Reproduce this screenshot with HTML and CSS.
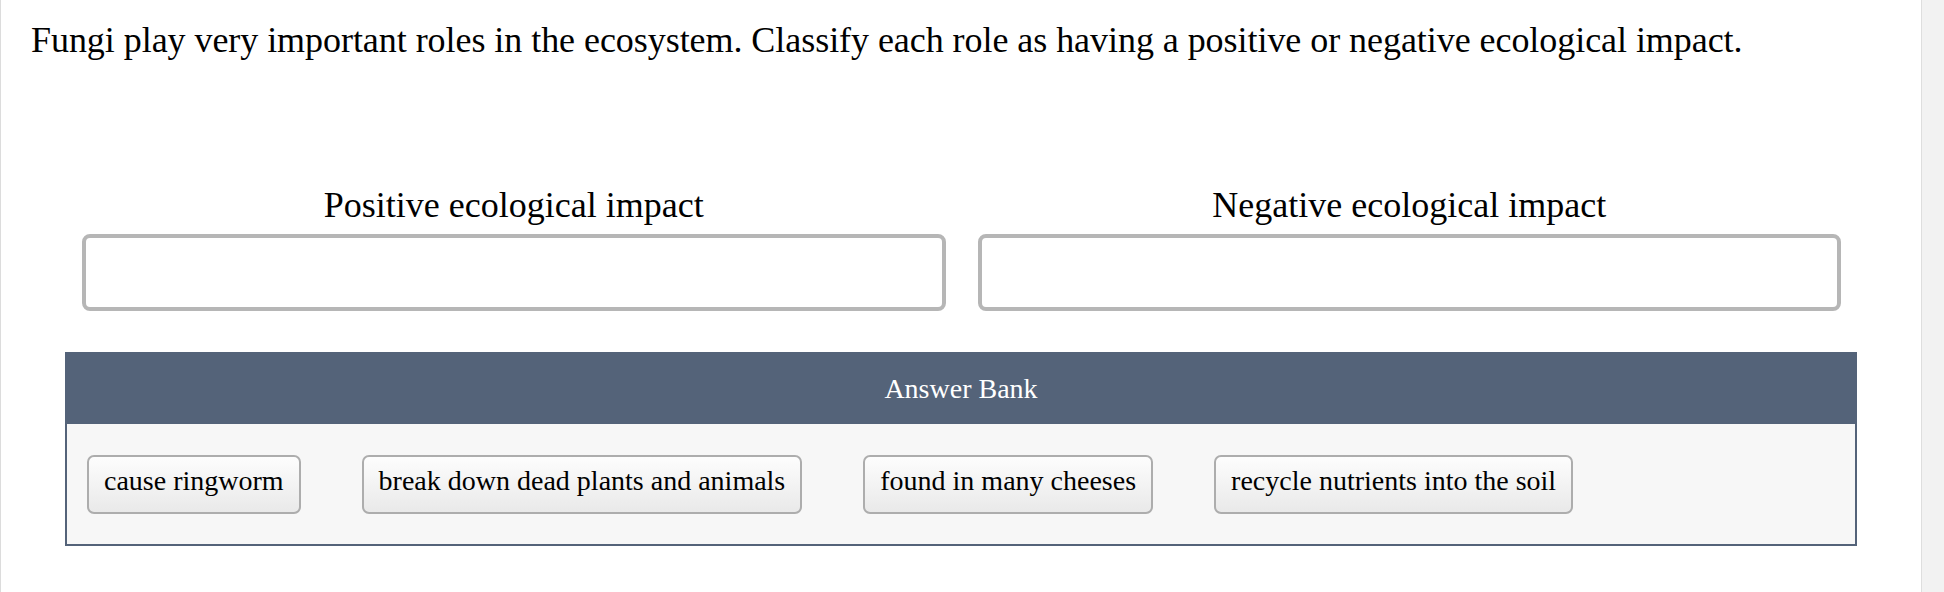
FILE: index.html
```html
<!DOCTYPE html>
<html>
<head>
    <meta http-equiv="Content-Type" content="text/html; charset=UTF-8">
    <title>Fungi ecological impact</title>
    <link rel="stylesheet" href="styles.css">
</head>
<body>
<div class="page">
    <div class="exercise">
        <p class="question">Fungi play very important roles in the ecosystem. Classify each role as having a positive or negative ecological impact.</p>

        <div class="bins">
            <div class="bin">
                <div class="bin-title">Positive ecological impact</div>
                <div class="drop-zone"></div>
            </div>
            <div class="bin">
                <div class="bin-title">Negative ecological impact</div>
                <div class="drop-zone"></div>
            </div>
        </div>

        <div class="answer-bank">
            <div class="bank-header">Answer Bank</div>
            <div class="bank-items">
                <div class="tile">cause ringworm</div>
                <div class="tile">break down dead plants and animals</div>
                <div class="tile">found in many cheeses</div>
                <div class="tile">recycle nutrients into the soil</div>
            </div>
        </div>
    </div>
    <div class="sidebar"></div>
</div>
</body>
</html>
```

FILE: styles.css
```css
html,
body {
    margin: 0;
    height: 100%;
    background: #fff;
}

body {
    font-family: "Liberation Serif", "Times New Roman", serif;
    color: #000;
}

.page {
    display: flex;
    height: 100%;
}

.exercise {
    flex: 1;
    border-left: 1px solid #dcdcdc;
}

.sidebar {
    width: 22px;
    background: #f2f2f2;
    border-left: 1px solid #dedede;
}

.question {
    font-size: 36px;
    letter-spacing: -0.05px;
    margin: 19px 0 0 30px;
}

.bins {
    display: grid;
    grid-template-columns: 1fr 1fr;
    gap: 32px;
    margin: 123px 80px 0 81px;
}

.bin-title {
    font-size: 36px;
    text-align: center;
    margin-bottom: 8px;
}

.drop-zone {
    height: 69px;
    border: 4px solid #b6b6b6;
    border-radius: 8px;
}

.answer-bank {
    margin: 41px 64px 0 64px;
    border: 2px solid #546379;
    background: #f7f7f7;
}

.bank-header {
    background: #546379;
    color: #fff;
    font-size: 28px;
    height: 70px;
    display: flex;
    align-items: center;
    justify-content: center;
}

.bank-items {
    display: flex;
    gap: 61px;
    padding: 31px 20px 30px;
}

.tile {
    font-size: 28px;
    line-height: 32px;
    padding: 8px 15px 15px;
    border: 2px solid #adadad;
    border-radius: 7px;
    background: linear-gradient(#fdfdfd, #e9e9e9);
}
```
